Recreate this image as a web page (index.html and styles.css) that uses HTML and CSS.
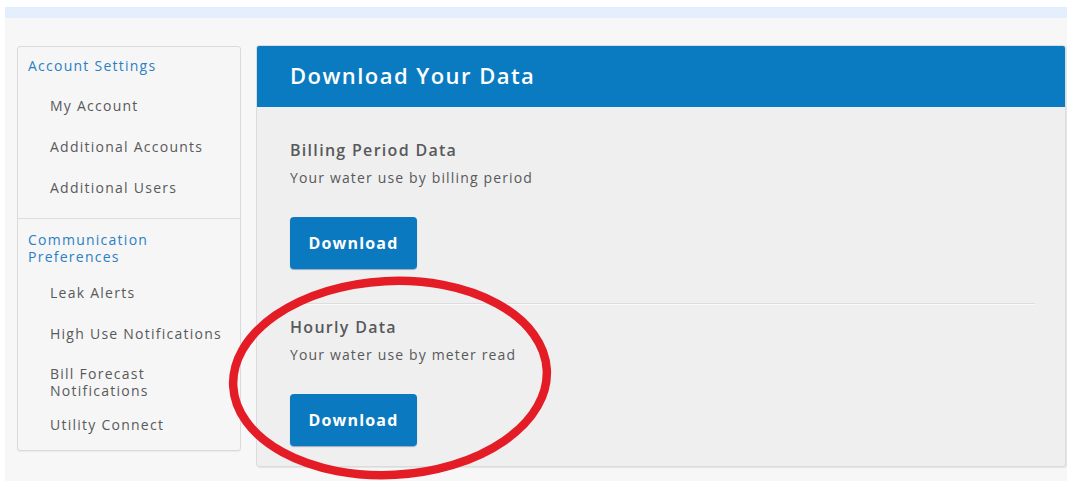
FILE: index.html
```html
<!DOCTYPE html>
<html lang="en">
<head>
<meta charset="utf-8">
<title>Download Your Data</title>
<link rel="stylesheet" href="styles.css">
</head>
<body>
<div class="top-strip"></div>
<div class="page">
  <nav class="sidebar">
    <div class="nav-group">
      <a class="nav-heading" href="#">Account Settings</a>
      <a class="nav-item" href="#">My Account</a>
      <a class="nav-item" href="#">Additional Accounts</a>
      <a class="nav-item" href="#">Additional Users</a>
    </div>
    <div class="nav-group nav-group-second">
      <a class="nav-heading" href="#">Communication<br>Preferences</a>
      <a class="nav-item" href="#">Leak Alerts</a>
      <a class="nav-item" href="#">High Use Notifications</a>
      <a class="nav-item nav-item-wrap" href="#">Bill Forecast<br>Notifications</a>
      <a class="nav-item" href="#">Utility Connect</a>
    </div>
  </nav>
  <main class="panel">
    <header class="panel-header">
      <h1>Download Your Data</h1>
    </header>
    <div class="panel-body">
      <section class="data-block data-block-first">
        <h2>Billing Period Data</h2>
        <p>Your water use by billing period</p>
        <button class="btn" type="button">Download</button>
      </section>
      <section class="data-block data-block-last">
        <h2>Hourly Data</h2>
        <p>Your water use by meter read</p>
        <button class="btn" type="button">Download</button>
      </section>
    </div>
  </main>
</div>
<svg class="mark" width="345" height="211" viewBox="0 0 345 211" aria-hidden="true">
  <ellipse cx="170" cy="108" rx="157" ry="97" transform="rotate(-3 170 108)" fill="none" stroke="#e41c26" stroke-width="8.5"/>
</svg>
</body>
</html>
```

FILE: styles.css
```css
html, body {
  margin: 0;
  padding: 0;
  background: #ffffff;
  height: 100%;
}

body {
  font-family: "Open Sans", "DejaVu Sans", sans-serif;
  color: #58595b;
  overflow: hidden;
}

.top-strip {
  margin: 7px 0 0 5px;
  height: 11px;
  background: #e3effc;
}

.page {
  margin-left: 5px;
  background: #f7f7f7;
  height: 463px;
  padding: 27px 1px 0 12px;
  box-sizing: border-box;
  display: flex;
  align-items: flex-start;
  gap: 15px;
}

/* ---- side navigation ---- */
.sidebar {
  width: 224px;
  height: 405px;
  margin-top: 1px;
  box-sizing: border-box;
  background: #f6f6f6;
  border: 1px solid #dadada;
  border-radius: 3px;
  box-shadow: 0 1px 1px rgba(0, 0, 0, 0.05);
  flex: none;
}

.nav-group {
  display: flex;
  flex-direction: column;
}

.nav-group:first-child {
  padding-bottom: 10px;
}

.nav-group-second {
  border-top: 1px solid #dedede;
}

.sidebar a {
  text-decoration: none;
  font-size: 14px;
  line-height: 17px;
  letter-spacing: 1.25px;
  white-space: nowrap;
}

.nav-heading {
  color: #2b7fc3;
  padding: 10px 8px 11px 10px;
}

.nav-group-second .nav-heading {
  padding: 12px 8px 7px 10px;
}

.nav-item {
  color: #58595b;
  padding: 12px 8px 12px 32px;
}

.nav-item-wrap {
  padding-top: 11px;
  padding-bottom: 5px;
}

/* ---- main panel ---- */
.panel {
  flex: 1;
  height: 422px;
  box-sizing: border-box;
  border: 1px solid #dcdcdc;
  border-radius: 3px;
  background: #efefef;
  box-shadow: 1px 1px 1px rgba(0, 0, 0, 0.08);
  overflow: hidden;
}

.panel-header {
  background: #0a7bc1;
  height: 61px;
  box-sizing: border-box;
  display: flex;
  align-items: center;
  padding: 0 0 4px 33px;
}

.panel-header h1 {
  margin: 0;
  color: #ffffff;
  font-size: 22px;
  font-weight: 600;
  letter-spacing: 1.45px;
}

.panel-body {
  padding: 0 30px 0 33px;
}

.data-block h2 {
  margin: 0;
  font-size: 16px;
  line-height: 20px;
  font-weight: 600;
  letter-spacing: 1.3px;
  color: #58595b;
}

.data-block p {
  margin: 9px 0 0;
  font-size: 14px;
  line-height: 18px;
  letter-spacing: 1.15px;
}

.data-block-first {
  padding: 33px 0 34px;
  border-bottom: 1px solid #dddddd;
  box-shadow: 0 1px 0 #fafafa;
}

.data-block-last {
  padding: 13px 0 20px;
}

.btn {
  margin-top: 30px;
  display: block;
  width: 127px;
  height: 52px;
  border: none;
  border-radius: 4px;
  background: #0b79c0;
  box-shadow: 0 1px 1px rgba(0, 40, 90, 0.35);
  color: #ffffff;
  font-family: inherit;
  font-size: 16px;
  font-weight: 700;
  letter-spacing: 1.2px;
  cursor: pointer;
}

/* red hand-drawn highlight around the hourly download */
.mark {
  position: absolute;
  left: 220px;
  top: 270px;
  pointer-events: none;
}
```
